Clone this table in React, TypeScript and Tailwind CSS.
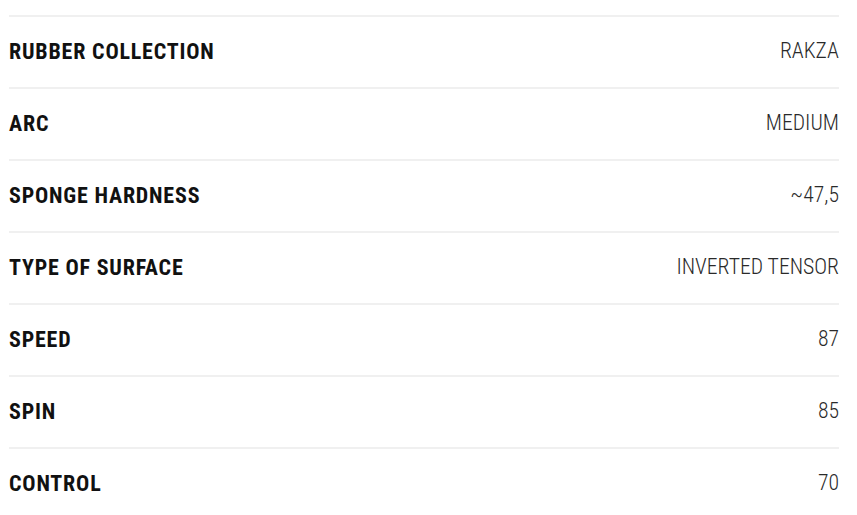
import React from 'react';

const specs = [
  { label: 'RUBBER COLLECTION', value: 'RAKZA' },
  { label: 'ARC', value: 'MEDIUM' },
  { label: 'SPONGE HARDNESS', value: '~47,5' },
  { label: 'TYPE OF SURFACE', value: 'INVERTED TENSOR' },
  { label: 'SPEED', value: '87' },
  { label: 'SPIN', value: '85' },
  { label: 'CONTROL', value: '70' },
];

export default function App() {
  return (
    <div
      className="min-h-screen bg-white pt-[15px] pl-[9px] pr-[18px]"
      style={{ fontFamily: '"Roboto Condensed", "Liberation Sans Narrow", "Liberation Sans", sans-serif' }}
    >
      {specs.map((item) => (
        <div
          key={item.label}
          className="flex h-[72px] items-center justify-between border-t-2 border-[#f0f0f0] pb-[2px]"
        >
          <span className="text-[22px] font-bold tracking-[0.8px] text-[#111]">{item.label}</span>
          <span className="text-[21.7px] font-light text-[#2a2a2a]">{item.value}</span>
        </div>
      ))}
    </div>
  );
}
